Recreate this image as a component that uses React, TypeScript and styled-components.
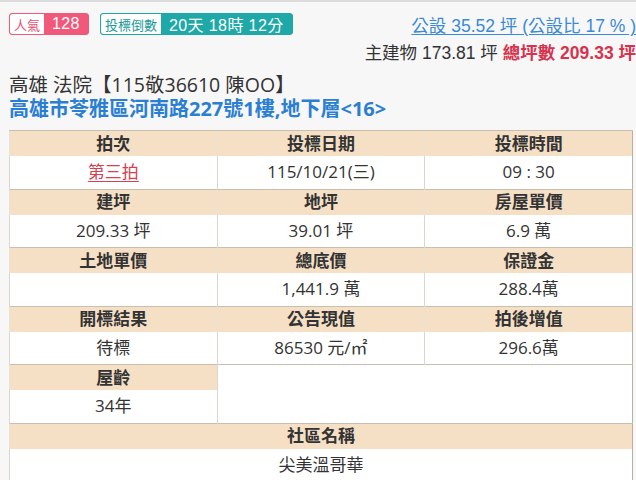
import React from "react";
import styled, { createGlobalStyle } from "styled-components";

const Global = createGlobalStyle`
  html, body { margin: 0; padding: 0; background: #f7f7f7; overflow: hidden; }
  body { font-family: "Open Sans", "Noto Sans CJK TC", sans-serif; color: #333; }
`;

const Page = styled.div`
  width: 636px;
  height: 480px;
  border-top: 2px solid #dcdcdc;
  box-sizing: border-box;
  padding: 0 3px 0 9px;
  overflow: hidden;
`;

const TopRow = styled.div`
  display: flex;
  justify-content: space-between;
  align-items: flex-start;
  margin-right: -3px;
  height: 72px;
`;

const Badges = styled.div`
  display: flex;
  gap: 11px;
  margin-top: 11px;
`;

const Badge = styled.div<{ $c: string }>`
  display: flex;
  height: 22px;
  border: 1px solid ${(p) => p.$c};
  border-radius: 3px;
  box-sizing: border-box;
  overflow: hidden;
  background: ${(p) => p.$c};
`;

const BadgeLabel = styled.span<{ $c: string }>`
  display: flex;
  align-items: center;
  padding: 0 4px;
  background: #fff;
  color: ${(p) => p.$c};
  font-size: 13px;
  border-radius: 2px 0 0 2px;
`;

const BadgeValue = styled.span`
  display: flex;
  align-items: center;
  padding: 0 8px;
  color: #fff;
  font-size: 16px;
  font-family: "Liberation Sans", "Noto Sans CJK TC", sans-serif;
  letter-spacing: 0.4px;
  white-space: nowrap;
`;

const AreaInfo = styled.div`
  display: flex;
  flex-direction: column;
  align-items: flex-end;
  margin-top: 12px;
  white-space: nowrap;
`;

const PublicLink = styled.a`
  color: #3a8ad6;
  font-size: 17.5px;
  line-height: 24px;
  text-decoration: underline;
  text-underline-offset: 2px;
  font-family: "Liberation Sans", "Noto Sans CJK TC", sans-serif;
`;

const AreaLine = styled.div`
  font-size: 17.5px;
  line-height: 22px;
  margin-top: 4px;
  font-family: "Liberation Sans", "Noto Sans CJK TC", sans-serif;
  color: #333;
`;

const Total = styled.span`
  color: #d7324e;
  font-weight: bold;
`;

const CaseTitle = styled.div`
  font-size: 19.5px;
  line-height: 22px;
  color: #333;
`;

const Address = styled.div`
  font-size: 20px;
  line-height: 24px;
  margin-top: 1px;
  color: #2a7fd2;
  font-weight: bold;
  margin-bottom: 9px;
  white-space: nowrap;
`;

const Table = styled.table`
  width: 624px;
  border-collapse: collapse;
  table-layout: fixed;
  border: 1px solid #b9b1a6;
  background: #fff;
`;

const HeadCell = styled.th`
  background: #f5e0c6;
  height: 25px;
  padding: 0;
  font-size: 17px;
  font-weight: bold;
  color: #333;
  text-align: center;
  border-top: 1px solid #c9bfb1;
  border-left: 1px solid #e8e2da;
  line-height: 24px;
`;

const ValueCell = styled.td<{ $sep?: boolean }>`
  background: #fff;
  height: 32.5px;
  padding: 0;
  font-size: 17px;
  color: #333;
  text-align: center;
  border-left: 1px solid #ddd6cc;
  border-top: ${(p) => (p.$sep ? "1px solid #c9bfb1" : "none")};
  line-height: 24px;
`;

const RedLink = styled.a`
  color: #d6404f;
  text-decoration: underline;
  text-underline-offset: 3px;
`;

type Pair = [string, React.ReactNode][];

const rows: Pair[] = [
  [
    ["拍次", <RedLink key="r">第三拍</RedLink>],
    ["投標日期", "115/10/21(三)"],
    ["投標時間", "09 : 30"],
  ],
  [
    ["建坪", "209.33 坪"],
    ["地坪", "39.01 坪"],
    ["房屋單價", "6.9 萬"],
  ],
  [
    ["土地單價", ""],
    ["總底價", "1,441.9 萬"],
    ["保證金", "288.4萬"],
  ],
  [
    ["開標結果", "待標"],
    ["公告現值", "86530 元/㎡"],
    ["拍後增值", "296.6萬"],
  ],
];

export default function App() {
  return (
    <>
      <Global />
      <Page>
        <TopRow>
          <Badges>
            <Badge $c="#f1587a">
              <BadgeLabel $c="#e8506f">人氣</BadgeLabel>
              <BadgeValue>128</BadgeValue>
            </Badge>
            <Badge $c="#1ea9a8">
              <BadgeLabel $c="#1a9a99">投標倒數</BadgeLabel>
              <BadgeValue>20天 18時 12分</BadgeValue>
            </Badge>
          </Badges>
          <AreaInfo>
            <PublicLink>公設 35.52 坪 (公設比 17 % )</PublicLink>
            <AreaLine>
              主建物 173.81 坪 <Total>總坪數 209.33 坪</Total>
            </AreaLine>
          </AreaInfo>
        </TopRow>
        <CaseTitle>高雄 法院【115敬36610 陳OO】</CaseTitle>
        <Address>高雄市苓雅區河南路227號1樓,地下層&lt;16&gt;</Address>
        <Table>
          <colgroup>
            <col />
            <col />
            <col />
          </colgroup>
          <tbody>
            {rows.map((pair, i) => (
              <React.Fragment key={i}>
                <tr>
                  {pair.map(([h]) => (
                    <HeadCell key={h}>{h}</HeadCell>
                  ))}
                </tr>
                <tr>
                  {pair.map(([h, v]) => (
                    <ValueCell key={h}>{v}</ValueCell>
                  ))}
                </tr>
              </React.Fragment>
            ))}
            <tr>
              <HeadCell>屋齡</HeadCell>
              <ValueCell rowSpan={2} colSpan={2} $sep />
            </tr>
            <tr>
              <ValueCell>34年</ValueCell>
            </tr>
            <tr>
              <HeadCell colSpan={3}>社區名稱</HeadCell>
            </tr>
            <tr>
              <ValueCell colSpan={3}>尖美溫哥華</ValueCell>
            </tr>
          </tbody>
        </Table>
      </Page>
    </>
  );
}
